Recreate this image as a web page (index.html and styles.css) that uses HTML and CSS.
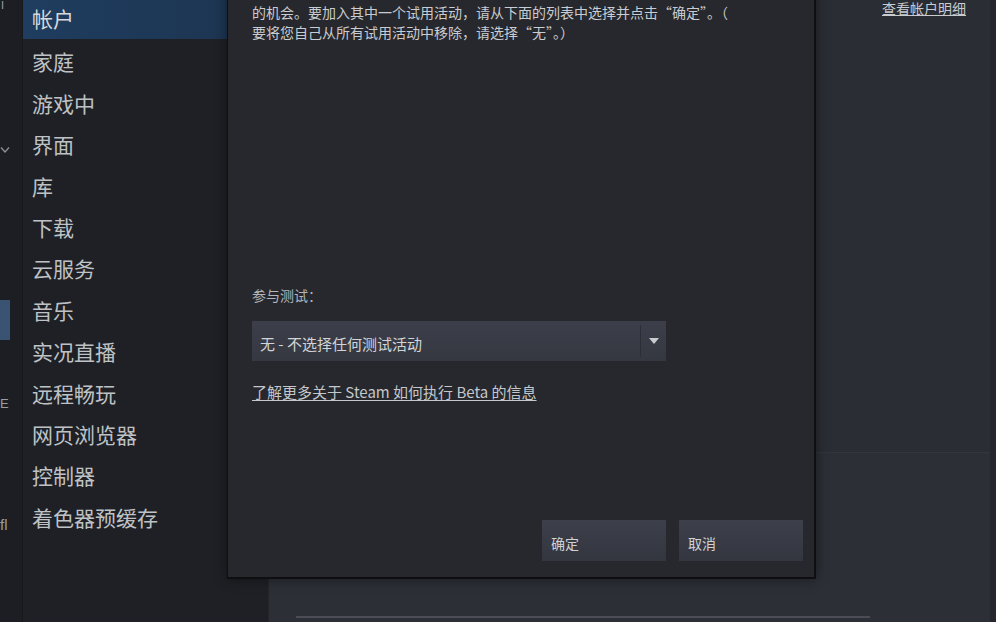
FILE: index.html
```html
<!DOCTYPE html>
<html lang="zh-CN">
<head>
    <meta charset="UTF-8">
    <title>Steam 设置</title>
    <link rel="stylesheet" href="styles.css">
</head>
<body>
    <div class="app">
        <!-- окно позади, видно только краешек -->
        <div class="back-strip">
            <span class="bs-top">I</span>
            <svg class="bs-chevron" width="10" height="8" viewBox="0 0 10 8"><path d="M1 1.5 L5 6 L9 1.5" fill="none" stroke="#8d9196" stroke-width="1.3"/></svg>
            <div class="bs-active"></div>
            <span class="bs-e">E</span>
            <span class="bs-fl">fl</span>
        </div>

        <div class="sidebar">
            <div class="nav-item active">帐户</div>
            <div class="nav-item">家庭</div>
            <div class="nav-item">游戏中</div>
            <div class="nav-item">界面</div>
            <div class="nav-item">库</div>
            <div class="nav-item">下载</div>
            <div class="nav-item">云服务</div>
            <div class="nav-item">音乐</div>
            <div class="nav-item">实况直播</div>
            <div class="nav-item">远程畅玩</div>
            <div class="nav-item">网页浏览器</div>
            <div class="nav-item">控制器</div>
            <div class="nav-item">着色器预缓存</div>
        </div>

        <div class="main">
            <div class="main-top">
                <a class="details-link" href="#">查看帐户明细</a>
            </div>
            <div class="main-panel">
                <div class="panel-line"></div>
            </div>
        </div>
    </div>

    <div class="dialog">
        <p class="dialog-text">的机会。要加入其中一个试用活动，请从下面的列表中选择并点击“确定”。（<br>要将您自己从所有试用活动中移除，请选择“无”。）</p>

        <div class="field-label">参与测试：</div>
        <div class="select">
            <span class="select-value">无 - 不选择任何测试活动</span>
            <span class="select-arrow">
                <svg width="10" height="7" viewBox="0 0 10 7"><path d="M0 0 H10 L5 6 Z" fill="#c9cbce"/></svg>
            </span>
        </div>
        <a class="beta-link" href="#">了解更多关于 Steam 如何执行 Beta 的信息</a>

        <div class="dialog-buttons">
            <button class="btn">确定</button>
            <button class="btn">取消</button>
        </div>
    </div>
</body>
</html>
```

FILE: styles.css
```css
body {
    margin: 0;
    background-color: #2b2e34;
    font-family: "Noto Sans CJK SC", "Noto Sans", sans-serif;
    color: #c6c9cc;
    overflow: hidden;
}
.app {
    display: flex;
    height: 622px;
}

/* полоска заднего окна */
.back-strip {
    width: 22px;
    flex-shrink: 0;
    background-color: #1c1e23;
    border-right: 1px solid #17181c;
    position: relative;
    overflow: hidden;
    color: #9a9ea3;
    font-family: "Liberation Sans", sans-serif;
}
.bs-top {
    position: absolute;
    left: 1px;
    top: 0;
    font-size: 11px;
    line-height: 11px;
}
.bs-chevron {
    position: absolute;
    left: 0;
    top: 146px;
}
.bs-active {
    position: absolute;
    left: 0;
    top: 300px;
    width: 10px;
    height: 40px;
    background-color: #3b5372;
}
.bs-e {
    position: absolute;
    left: 0;
    top: 396px;
    font-size: 13px;
}
.bs-fl {
    position: absolute;
    left: 0;
    top: 516px;
    font-size: 15px;
}

.sidebar {
    width: 245px;
    flex-shrink: 0;
    background-color: #1e2025;
}
.nav-item {
    height: 41.4px;
    line-height: 41.4px;
    padding-left: 9px;
    font-size: 21px;
    color: #bfc2c5;
    white-space: nowrap;
}
.nav-item.active {
    height: 39px;
    line-height: 36px;
    background: linear-gradient(90deg, #1f3d5f, #1d3450);
    color: #d6d9dc;
    margin-bottom: 2.4px;
}

.main {
    flex: 1;
    display: flex;
    flex-direction: column;
    background-color: #2a2d33;
    border-left: 1px solid #23252a;
    border-right: 6px solid #25272c;
}
.main-top {
    height: 452px;
    display: flex;
    justify-content: flex-end;
    align-items: flex-start;
    padding-right: 24px;
    border-bottom: 1px solid #33363d;
}
.details-link {
    color: #c8cbcf;
    font-size: 14px;
    line-height: 17px;
    text-decoration: underline;
}
.main-panel {
    flex: 1;
    display: flex;
    flex-direction: column;
    justify-content: flex-end;
    padding: 0 120px 4px 27px;
    background-color: #2c2f36;
}
.panel-line {
    height: 2px;
    background-color: #4a4d55;
}

/* диалог поверх окна настроек */
.dialog {
    position: absolute;
    left: 227px;
    top: -20px;
    width: 589px;
    height: 599px;
    background-color: #26282d;
    border: 1px solid #0e0f11;
    border-right-width: 2px;
    border-bottom-width: 2px;
    box-shadow: 0 0 12px rgba(0, 0, 0, 0.45);
    padding: 0 11px 0 24px;
    box-sizing: border-box;
    display: flex;
    flex-direction: column;
}
.dialog-text {
    margin: 21px 0 0;
    font-size: 14px;
    line-height: 20px;
    color: #c9ccd0;
}
.field-label {
    margin-top: 243px;
    font-size: 14px;
    color: #b2b5b9;
}
.select {
    margin-top: 16px;
    width: 414px;
    height: 40px;
    display: flex;
    align-items: center;
    background: linear-gradient(180deg, #3c3f49, #353841);
    box-sizing: border-box;
}
.select-value {
    flex: 1;
    padding-left: 8px;
    font-size: 15px;
    color: #d2d4d7;
    padding-top: 4px;
}
.select-arrow {
    width: 25px;
    height: 32px;
    border-left: 1px solid #2c2e35;
    display: flex;
    align-items: center;
    justify-content: center;
}
.beta-link {
    margin-top: 20px;
    align-self: flex-start;
    font-size: 15px;
    color: #c4c7cb;
    text-decoration: underline;
    text-underline-offset: 2px;
}
.dialog-buttons {
    margin-top: auto;
    margin-bottom: 16px;
    display: flex;
    justify-content: flex-end;
    gap: 13px;
}
.btn {
    width: 124px;
    height: 41px;
    border: none;
    background: linear-gradient(180deg, #3d404a, #33363f);
    color: #d0d2d5;
    font-family: "Noto Sans CJK SC", sans-serif;
    font-size: 14px;
    text-align: left;
    padding: 4px 9px 0;
}
```
